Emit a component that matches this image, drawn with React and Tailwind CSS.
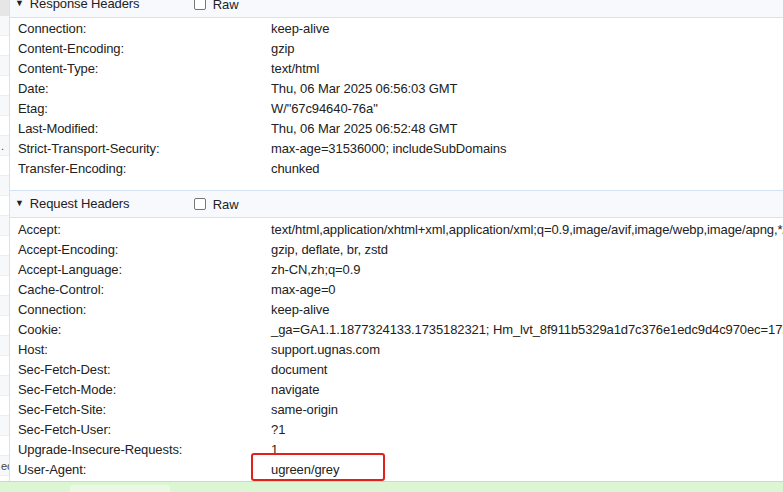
import React from 'react';

const responseHeaders = [
  ['Connection:', 'keep-alive'],
  ['Content-Encoding:', 'gzip'],
  ['Content-Type:', 'text/html'],
  ['Date:', 'Thu, 06 Mar 2025 06:56:03 GMT'],
  ['Etag:', 'W/"67c94640-76a"'],
  ['Last-Modified:', 'Thu, 06 Mar 2025 06:52:48 GMT'],
  ['Strict-Transport-Security:', 'max-age=31536000; includeSubDomains'],
  ['Transfer-Encoding:', 'chunked'],
];

const requestHeaders = [
  ['Accept:', 'text/html,application/xhtml+xml,application/xml;q=0.9,image/avif,image/webp,image/apng,*/*;q=0.8'],
  ['Accept-Encoding:', 'gzip, deflate, br, zstd'],
  ['Accept-Language:', 'zh-CN,zh;q=0.9'],
  ['Cache-Control:', 'max-age=0'],
  ['Connection:', 'keep-alive'],
  ['Cookie:', '_ga=GA1.1.1877324133.1735182321; Hm_lvt_8f911b5329a1d7c376e1edc9d4c970ec=1735182321'],
  ['Host:', 'support.ugnas.com'],
  ['Sec-Fetch-Dest:', 'document'],
  ['Sec-Fetch-Mode:', 'navigate'],
  ['Sec-Fetch-Site:', 'same-origin'],
  ['Sec-Fetch-User:', '?1'],
  ['Upgrade-Insecure-Requests:', '1'],
  ['User-Agent:', 'ugreen/grey'],
];

const SectionHeader = ({ title }) => (
  <div className="h-[28px] shrink-0 flex items-center bg-[#f8f9fd] border-y border-[#d5e1f5]">
    <span className="ml-[5px] text-[9px] text-[#222]">▼</span>
    <span className="ml-[6px] w-[164px]">{title}</span>
    <span className="w-[12px] h-[12px] border border-[#777] rounded-[2px] bg-white"></span>
    <span className="ml-[7px] mt-[2px]">Raw</span>
  </div>
);

const Row = ({ label, value, highlight }) => (
  <div className="h-[20px] flex items-center whitespace-nowrap">
    <span className="pl-[8px] w-[260px] shrink-0">{label}</span>
    {highlight ? (
      <span className="relative ml-[1px]">
        {value}
        <span className="absolute left-[-20px] top-[-7px] w-[134px] h-[28px] border-2 border-[#e3201b] rounded-[3px]"></span>
      </span>
    ) : (
      <span className="ml-[1px]">{value}</span>
    )}
  </div>
);

const App = () => {
  const leftRows = Array.from({ length: 23 });

  return (
    <div className="w-[783px] h-[492px] overflow-hidden bg-white flex flex-col text-[13px] tracking-[-0.1px] text-[#222]" style={{ fontFamily: '"Liberation Sans", Arial, sans-serif' }}>
      <div className="flex flex-1 min-h-0">
        {/* left list panel, mostly hidden */}
        <div className="w-[10px] shrink-0 flex flex-col overflow-hidden border-r border-[#d5e1f5]">
          <div className="h-[16px] shrink-0 bg-[#e6e6e6]"></div>
          {leftRows.map((_, i) => (
            <div key={i} className={`h-[20px] shrink-0 border-b border-[#eceef2] ${i % 2 ? 'bg-white' : 'bg-[#f7f8fa]'} text-[11px] leading-[20px] pl-[1px] text-[#444]`}>
              {i === 6 ? '.' : i === 22 ? 'ec' : ''}
            </div>
          ))}
        </div>

        {/* headers panel */}
        <div className="flex-1 min-w-0 overflow-hidden flex flex-col -mt-[10px]">
          <SectionHeader title="Response Headers" />
          <div className="pt-[1px] pb-[11px]">
            {responseHeaders.map(([k, v]) => (
              <Row key={k} label={k} value={v} />
            ))}
          </div>
          <SectionHeader title="Request Headers" />
          <div className="pt-[2px]">
            {requestHeaders.map(([k, v]) => (
              <Row key={k} label={k} value={v} highlight={k === 'User-Agent:'} />
            ))}
          </div>
        </div>
      </div>

      {/* status strip */}
      <div className="h-[11px] shrink-0 bg-[#dcf5d3] border-t border-[#c8dcc4] flex">
        <div className="ml-[70px] mt-[3px] w-[100px] rounded-t-[3px] bg-[#eaf8e4]"></div>
      </div>
    </div>
  );
};

export default App;
